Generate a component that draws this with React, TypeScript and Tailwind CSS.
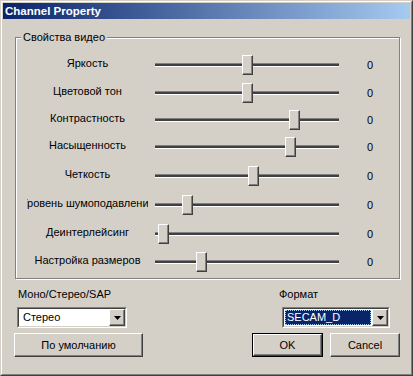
const rows = [
  { label: 'Яркость', h: 'h-[29px]', left: 'left-[87px]' },
  { label: 'Цветовой тон', h: 'h-[27px]', left: 'left-[87px]' },
  { label: 'Контрастность', h: 'h-[27px]', left: 'left-[134px]' },
  { label: 'Насыщенность', h: 'h-[28px]', left: 'left-[130px]' },
  { label: 'Четкость', h: 'h-[29px]', left: 'left-[93px]' },
  { label: 'Уровень шумоподавления', h: 'h-[30px]', left: 'left-[27px]' },
  { label: 'Деинтерлейсинг', h: 'h-[28px]', left: 'left-[3px]' },
  { label: 'Настройка размеров', h: 'h-[28px]', left: 'left-[41px]' },
];

const raised =
  'border border-t-white border-l-white border-r-[#404040] border-b-[#404040] shadow-[inset_-1px_-1px_0_#808080] bg-[#d4d0c8]';

const Arrow = () => (
  <div className={`flex w-[16px] items-center justify-center ${raised}`}>
    <svg width="7" height="4" viewBox="0 0 7 4">
      <polygon points="0,0 7,0 3.5,4" fill="#000" />
    </svg>
  </div>
);

const Combo = ({ value, selected, className }: { value: string; selected?: boolean; className: string }) => (
  <div className={`flex h-[21px] border border-t-[#808080] border-l-[#808080] border-b-white border-r-white ${className}`}>
    <div className="flex flex-1 border border-t-[#404040] border-l-[#404040] border-b-[#d4d0c8] border-r-[#d4d0c8] bg-white">
      <div className="flex flex-1 p-[1px]">
        {selected ? (
          <div className="flex flex-1 items-center bg-[#0a246a] pl-[2px] text-white outline-1 outline-dotted outline-[#a6caf0] outline-offset-[-1px]">
            {value}
          </div>
        ) : (
          <div className="flex flex-1 items-center pl-[3px]">{value}</div>
        )}
      </div>
      <Arrow />
    </div>
  </div>
);

const App = () => {
  return (
    <div className="h-[376px] w-[413px] border border-t-[#d4d0c8] border-l-[#d4d0c8] border-r-[#404040] border-b-[#404040] bg-[#d4d0c8] font-['Liberation_Sans',Arial,sans-serif] text-[11px] text-black">
      <div className="h-full border border-t-white border-l-white border-r-[#808080] border-b-[#808080] p-[1px]">
        {/* Title bar */}
        <div className="h-[16px] bg-[linear-gradient(to_right,#0a246a,#a6caf0)] pl-[2px] text-[11.5px] font-bold leading-[16px] text-white">
          Channel Property
        </div>

        {/* Video group */}
        <div className="relative ml-[12px] mt-[18px] h-[242px] w-[385px] border border-[#808080] pt-[12px] shadow-[inset_1px_1px_0_#fff,1px_1px_0_#fff]">
          <div className="absolute left-[5px] top-[-8px] bg-[#d4d0c8] px-[2px] leading-[14px]">Свойства видео</div>
          {rows.map((r) => (
            <div key={r.label} className={`flex items-center ${r.h}`}>
              <div className="mb-[4px] ml-[11px] flex w-[121px] justify-center overflow-hidden whitespace-nowrap leading-[14px]">
                {r.label}
              </div>
              <div className="relative ml-[7px] h-[4px] w-[184px] border-t border-b border-t-[#808080] border-b-white bg-[#404040]">
                <div className={`absolute top-[-9px] h-[20px] w-[11px] border border-t-white border-l-white border-r-[#404040] border-b-[#404040] bg-[#d4d0c8] shadow-[inset_-1px_-1px_0_#808080] ${r.left}`} />
              </div>
              <div className="ml-[6px] w-[50px] text-center leading-[14px]">0</div>
            </div>
          ))}
        </div>

        {/* Bottom controls */}
        <div className="mt-[8px] flex justify-between pl-[11px] pr-[10px]">
          <div className="flex w-[129px] flex-col">
            <div className="h-[14px] pl-[4px] leading-[14px]">Моно/Стерео/SAP</div>
            <Combo value="Стерео" className="ml-[3px] mt-[6px] w-[110px]" />
            <button className={`mt-[5px] h-[24px] w-[129px] ${raised}`}>По умолчанию</button>
          </div>
          <div className="flex w-[148px] flex-col">
            <div className="h-[14px] pl-[27px] leading-[14px]">Формат</div>
            <Combo value="SECAM_D" selected className="ml-[30px] mt-[6px] w-[108px]" />
            <div className="mt-[5px] flex gap-[7px]">
              <div className="h-[24px] w-[71px] border border-black">
                <button className={`h-full w-full ${raised}`}>OK</button>
              </div>
              <button className={`h-[24px] w-[70px] ${raised}`}>Cancel</button>
            </div>
          </div>
        </div>
      </div>
    </div>
  );
};

export default App;
